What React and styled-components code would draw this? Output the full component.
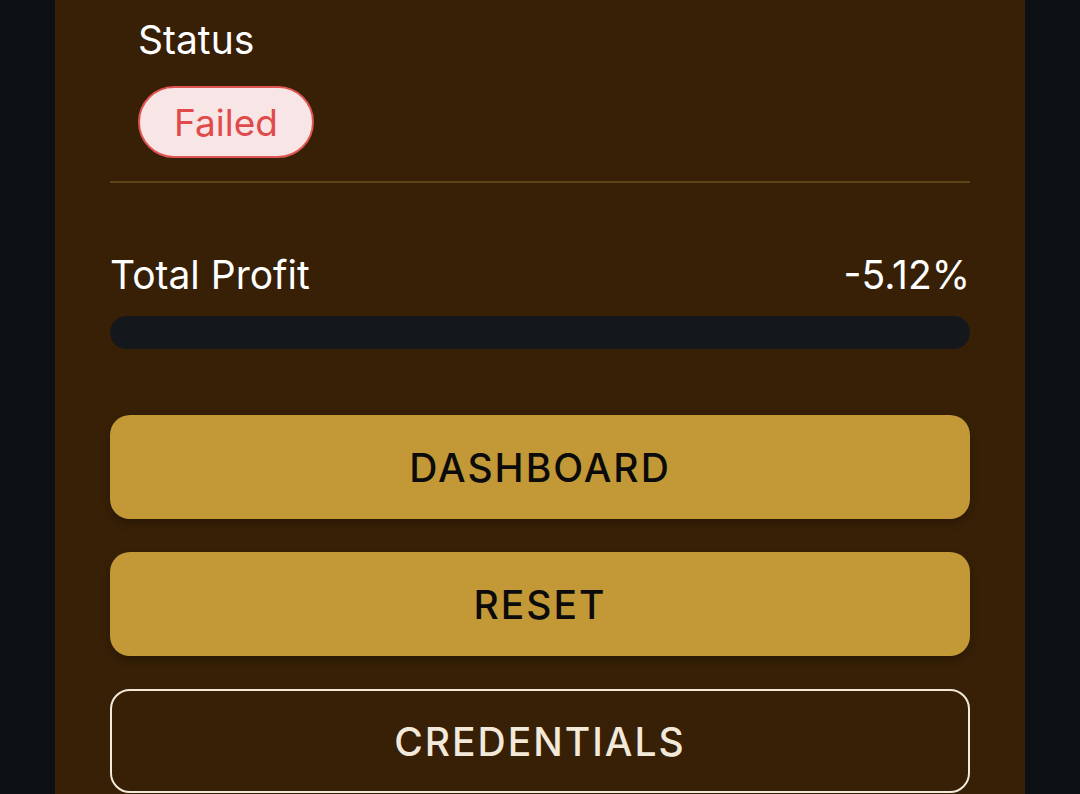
import React from "react";
import styled, { createGlobalStyle } from "styled-components";

const Global = createGlobalStyle`
  html, body { margin: 0; padding: 0; background: #0c1014; overflow: hidden; }
  * { box-sizing: border-box; }
  body { font-family: Inter, "Open Sans", sans-serif; }
`;

const Page = styled.div`
  width: 1080px;
  height: 794px;
  padding: 0 55px;
  background: #0c1014;
  display: flex;
`;

const Panel = styled.main`
  flex: 1;
  background: #372006;
  padding: 18px 55px 0;
  display: flex;
  flex-direction: column;
`;

const StatusBlock = styled.section`
  padding-left: 28px;
  display: flex;
  flex-direction: column;
  align-items: flex-start;
  gap: 24px;
  padding-bottom: 23px;
  border-bottom: 2px solid #5e4519;
`;

const Label = styled.span`
  color: #ffffff;
  font-size: 39px;
  line-height: 44px;
  font-weight: 400;
`;

const Badge = styled.span`
  display: inline-flex;
  align-items: center;
  justify-content: center;
  height: 72px;
  padding: 0 34px;
  border-radius: 36px;
  border: 2px solid #e05454;
  background: #f8e6e6;
  color: #e04a4a;
  font-size: 37px;
`;

const ProfitRow = styled.div`
  display: flex;
  justify-content: space-between;
  align-items: center;
  margin-top: 70px;
`;

const Bar = styled.div`
  margin-top: 19px;
  height: 33px;
  border-radius: 17px;
  background: #14171b;
`;

const Buttons = styled.div`
  margin-top: 66px;
  display: flex;
  flex-direction: column;
  gap: 33px;
`;

const Button = styled.button`
  height: 104px;
  border-radius: 20px;
  font-family: Inter, "Open Sans", sans-serif;
  font-size: 39px;
  letter-spacing: 2px;
  font-weight: 500;
  cursor: pointer;
  background: ${(p) => (p.$outline ? "transparent" : "#c39836")};
  color: ${(p) => (p.$outline ? "#f2e9db" : "#0b0b0b")};
  border: ${(p) => (p.$outline ? "2px solid #f2e9db" : "none")};
  box-shadow: ${(p) => (p.$outline ? "none" : "0 4px 10px rgba(0,0,0,0.25)")};
`;

export default function App() {
  return (
    <>
      <Global />
      <Page>
        <Panel>
          <StatusBlock>
            <Label>Status</Label>
            <Badge>Failed</Badge>
          </StatusBlock>
          <ProfitRow>
            <Label>Total Profit</Label>
            <Label>-5.12%</Label>
          </ProfitRow>
          <Bar />
          <Buttons>
            <Button>DASHBOARD</Button>
            <Button>RESET</Button>
            <Button $outline>CREDENTIALS</Button>
          </Buttons>
        </Panel>
      </Page>
    </>
  );
}
